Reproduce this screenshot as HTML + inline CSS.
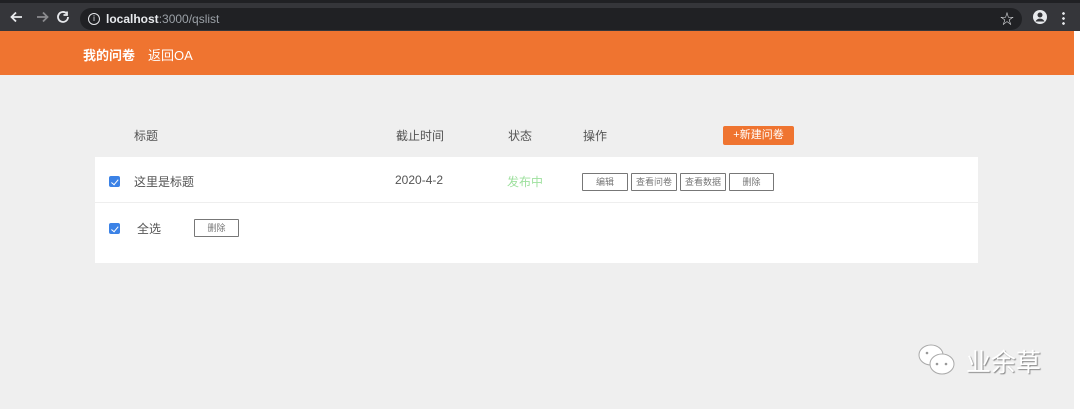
<!DOCTYPE html>
<html><head><meta charset="utf-8"><style>
*{margin:0;padding:0;box-sizing:border-box}
body{width:1080px;height:409px;background:#efefef;font-family:"Liberation Sans","Noto Sans CJK SC",sans-serif;position:relative;overflow:hidden;color:#555}
.bar{position:absolute;left:0;top:0;width:1080px;height:31px;background:#35363a;border-top:3px solid #202124}
.addr{position:absolute;left:80px;top:5px;width:942px;height:22px;border-radius:11px;background:#202124;color:#e8eaed;font-size:12px;line-height:22px;padding-left:26px}
.abs{position:absolute}
.hdr{position:absolute;left:0;top:31px;width:1074px;height:44px;background:#ef7430;color:#fff}
.card{position:absolute;left:95px;top:157px;width:883px;height:106px;background:#fff}
.t{position:absolute;font-size:12px;color:#555;white-space:nowrap}
.cb{position:absolute;width:11px;height:11px;background:#3b82e6;border-radius:2px}
.cb:after{content:"";position:absolute;left:3.5px;top:1.5px;width:3px;height:5.5px;border:solid #fff;border-width:0 1.3px 1.3px 0;transform:rotate(40deg)}
.btn{position:absolute;height:18px;border:1px solid #777;border-radius:1px;font-size:9px;color:#777;text-align:center;line-height:16px;background:#fff}
</style></head><body>
<div class="bar">
<svg class="abs" style="left:9px;top:6px" width="60" height="16" viewBox="0 0 60 16" fill="none" stroke-width="1.8"><path d="M13 8H3M7 3.5L2.5 8 7 12.5" stroke="#e8eaed"/><path d="M28 8h10M34 3.5L38.5 8 34 12.5" stroke="#8a8b8e"/><path d="M61 8a5 5 0 1 1-1.5-3.6" stroke="#e8eaed" transform="translate(-2 0)"/><path d="M58 2.5v3.5h-3.5" stroke="#e8eaed"/></svg>
<div class="addr"><span style="position:absolute;left:8px;top:5px;width:12px;height:12px;border:1.5px solid #e8eaed;border-radius:50%;font-size:8px;line-height:9px;text-align:center">i</span><span style="font-weight:600">localhost</span><span style="color:#9aa0a6">:3000/qslist</span><span style="position:absolute;right:8px;top:0;font-size:14px">☆</span></div>
<svg class="abs" style="left:1032px;top:6px" width="16" height="16" viewBox="0 0 16 16"><circle cx="8" cy="8" r="7" fill="#e8eaed"/><circle cx="8" cy="6" r="2.5" fill="#35363a"/><path d="M3.5 12.5a5 5 0 0 1 9 0" fill="#35363a"/></svg>
<div class="abs" style="left:1062px;top:8px;width:3px;height:14px;background:radial-gradient(circle,#e8eaed 1.2px,transparent 1.5px) 0 0/3px 5px"></div>
</div>
<div class="hdr"><span class="abs" style="left:83px;top:14px;font-size:13px;font-weight:bold">我的问卷</span><span class="abs" style="left:148px;top:14px;font-size:13px">返回OA</span></div>
<span class="t" style="left:134px;top:127px">标题</span>
<span class="t" style="left:396px;top:127px">截止时间</span>
<span class="t" style="left:508px;top:127px">状态</span>
<span class="t" style="left:583px;top:127px">操作</span>
<div class="abs" style="left:723px;top:126px;width:71px;height:19px;background:#ef7430;border-radius:2px;color:#fff;font-size:11px;text-align:center;line-height:19px">+新建问卷</div>
<div class="card">
<div class="cb" style="left:14px;top:19px"></div>
<span class="t" style="left:39px;top:16px">这里是标题</span>
<span class="t" style="left:300px;top:16px">2020-4-2</span>
<span class="t" style="left:412px;top:16px;color:#9ee09e">发布中</span>
<div class="btn" style="left:487px;top:16px;width:46px">编辑</div>
<div class="btn" style="left:536px;top:16px;width:46px">查看问卷</div>
<div class="btn" style="left:585px;top:16px;width:46px">查看数据</div>
<div class="btn" style="left:634px;top:16px;width:45px">删除</div>
<div class="abs" style="left:0;top:45px;width:883px;height:1px;background:#eee"></div>
<div class="cb" style="left:14px;top:66px"></div>
<span class="t" style="left:42px;top:63px">全选</span>
<div class="btn" style="left:99px;top:62px;width:45px">删除</div>
</div>
<svg class="abs" style="left:916px;top:342px" width="44" height="38" viewBox="0 0 44 38"><ellipse cx="15" cy="13" rx="12" ry="10" fill="#fff" stroke="#aaa"/><ellipse cx="26" cy="22" rx="12" ry="10" fill="#fff" stroke="#aaa"/><circle cx="21" cy="22" r="1.3" fill="#999"/><circle cx="30" cy="22" r="1.3" fill="#999"/><circle cx="11" cy="11" r="1.3" fill="#999"/></svg>
<span class="abs" style="left:966px;top:343px;font-size:25px;color:#fff;text-shadow:1px 1px 1px #888">业余草</span>
<div class="abs" style="left:1074px;top:31px;width:6px;height:378px;background:#fff"></div>
</body></html>
